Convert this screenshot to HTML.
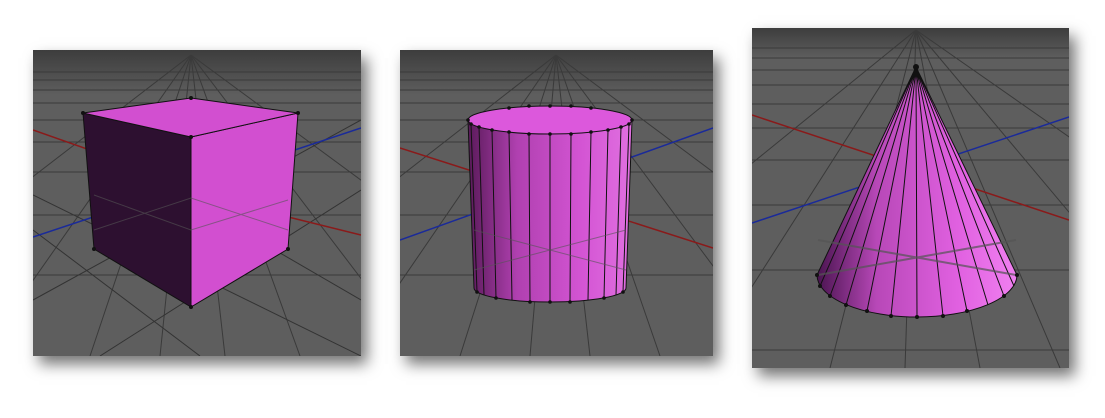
<!DOCTYPE html>
<html><head><meta charset="utf-8"><style>
html,body{margin:0;padding:0;background:#fff;width:1105px;height:418px;overflow:hidden}
.p{position:absolute;background:#5e5e5e;box-shadow:6px 8px 14px rgba(0,0,0,.55)}
svg{position:absolute;left:0;top:0}
</style></head><body>
<div class="p" style="left:33px;top:50px;width:328px;height:306px"></div>
<div class="p" style="left:400px;top:50px;width:313px;height:306px"></div>
<div class="p" style="left:752px;top:28px;width:317px;height:340px"></div>
<svg width="1105" height="418" viewBox="0 0 1105 418">
<defs>
<clipPath id="c1"><rect x="33" y="50" width="328" height="306"/></clipPath>
<clipPath id="c2"><rect x="400" y="50" width="313" height="306"/></clipPath>
<clipPath id="c3"><rect x="752" y="28" width="317" height="340"/></clipPath>
<linearGradient id="sky" x1="0" y1="0" x2="0" y2="1"><stop offset="0" stop-color="#3d3d3d"/><stop offset="1" stop-color="#5e5e5e"/></linearGradient>
<linearGradient id="cyl" x1="0" y1="0" x2="1" y2="0"><stop offset="0" stop-color="#5a1a5a"/><stop offset=".3" stop-color="#b040b0"/><stop offset=".7" stop-color="#d455d4"/><stop offset="1" stop-color="#e070e0"/></linearGradient>
<linearGradient id="cone" x1="0" y1="0" x2="1" y2="0"><stop offset="0" stop-color="#4a1450"/><stop offset=".3" stop-color="#b848b8"/><stop offset=".7" stop-color="#e060e0"/><stop offset="1" stop-color="#f080f0"/></linearGradient>
</defs>
<g stroke="#3a3a3a" stroke-width="1" fill="none">
<g clip-path="url(#c1)">
<rect x="33" y="50" width="328" height="45" fill="url(#sky)" stroke="none"/>
<path d="M33 72H361M33 80H361M33 90H361M33 103H361M33 120H361M33 142H361M33 172H361M33 215H361M33 275H361"/>
<path d="M191 55L-200 356M191 55L-20 356M191 55L90 356M191 55L160 356M191 55L225 356M191 55L300 356M191 55L420 356M191 55L600 356"/>
<path d="M33 195L361 356M33 230L200 356M120 160L361 300M33 300L361 120M100 356L361 190" stroke="#333"/>
<path d="M33 130L260 210M260 210L361 235" stroke="#8a1a1a" stroke-width="1.5"/>
<path d="M33 237L361 128" stroke="#1a2a9a" stroke-width="1.5"/>
</g>
<g clip-path="url(#c2)">
<rect x="400" y="50" width="313" height="45" fill="url(#sky)" stroke="none"/>
<path d="M400 72H713M400 80H713M400 90H713M400 103H713M400 120H713M400 142H713M400 172H713M400 215H713M400 275H713"/>
<path d="M556 55L170 356M556 55L350 356M556 55L460 356M556 55L530 356M556 55L590 356M556 55L660 356M556 55L780 356M556 55L960 356"/>
<path d="M400 148L713 248" stroke="#8a1a1a" stroke-width="1.5"/>
<path d="M400 240L713 128" stroke="#1a2a9a" stroke-width="1.5"/>
</g>
<g clip-path="url(#c3)">
<rect x="752" y="28" width="317" height="30" fill="url(#sky)" stroke="none"/>
<path d="M752 48H1069M752 58H1069M752 70H1069M752 85H1069M752 104H1069M752 128H1069M752 160H1069M752 205H1069M752 270H1069M752 350H1069"/>
<path d="M916 30L500 368M916 30L700 368M916 30L830 368M916 30L905 368M916 30L980 368M916 30L1060 368M916 30L1200 368M916 30L1400 368"/>
<path d="M752 115L1069 220" stroke="#8a1a1a" stroke-width="1.5"/>
<path d="M752 223L1069 117" stroke="#1a2a9a" stroke-width="1.5"/>
</g>
</g>
<!-- cube -->
<polygon points="83,113 191,137 191,307 94,249" fill="#2d1030" stroke="#111" stroke-width="1"/>
<polygon points="191,137 298,113 288,249 191,307" fill="#d24fd0" stroke="#111" stroke-width="1"/>
<polygon points="83,113 191,98 298,113 191,137" fill="#d24fd0" stroke="#111" stroke-width="1"/>
<path d="M94 230L191 198L288 230M94 195L191 230L288 200" stroke="#555" stroke-width="1" fill="none" opacity=".6"/>
<g fill="#111"><circle cx="83" cy="113" r="2"/><circle cx="191" cy="98" r="2"/><circle cx="298" cy="113" r="2"/><circle cx="191" cy="137" r="2"/><circle cx="94" cy="249" r="2"/><circle cx="191" cy="307" r="2"/><circle cx="288" cy="249" r="2"/></g>
<!-- cylinder -->
<path d="M468 120L474 288A76 14 0 0 0 626 288L632 120Z" fill="url(#cyl)" stroke="#111"/>
<g stroke="#111" stroke-width="1">
<path d="M629 124L623 292M621 127L616 295M608 130L604 298M591 132L588 300M571 134L570 302M550 134L550 302M529 134L530 302M509 132L512 300M492 130L496 298M479 127L484 295M471 124L477 292"/>
</g>
<ellipse cx="550" cy="120" rx="82" ry="14" fill="#dc58dc" stroke="#111"/>
<path d="M474 270L626 230M474 230L626 270" stroke="#555" opacity=".6"/>
<g fill="#111"><circle cx="629" cy="124" r="1.8"/><circle cx="621" cy="127" r="1.8"/><circle cx="608" cy="130" r="1.8"/><circle cx="591" cy="132" r="1.8"/><circle cx="571" cy="134" r="1.8"/><circle cx="550" cy="134" r="1.8"/><circle cx="529" cy="134" r="1.8"/><circle cx="509" cy="132" r="1.8"/><circle cx="492" cy="130" r="1.8"/><circle cx="479" cy="127" r="1.8"/><circle cx="471" cy="124" r="1.8"/><circle cx="550" cy="106" r="1.8"/><circle cx="571" cy="106" r="1.8"/><circle cx="529" cy="106" r="1.8"/><circle cx="591" cy="108" r="1.8"/><circle cx="509" cy="108" r="1.8"/><circle cx="632" cy="120" r="1.8"/><circle cx="468" cy="120" r="1.8"/><circle cx="623" cy="292" r="1.8"/><circle cx="604" cy="298" r="1.8"/><circle cx="570" cy="302" r="1.8"/><circle cx="550" cy="302" r="1.8"/><circle cx="530" cy="302" r="1.8"/><circle cx="496" cy="298" r="1.8"/><circle cx="477" cy="292" r="1.8"/></g>
<!-- cone -->
<path d="M916 67L817 275A100 42 0 0 0 1017 275Z" fill="url(#cone)" stroke="#111"/>
<path stroke="#111" stroke-width="1" d="M916 67L1014 286M916 67L1004 296M916 67L988 305M916 67L967 311M916 67L943 316M916 67L917 317M916 67L891 316M916 67L867 311M916 67L846 305M916 67L830 296M916 67L820 286"/>
<path d="M818 275L1016 240M818 240L1016 275" stroke="#555" stroke-width="2" opacity=".7"/>
<g fill="#111"><circle cx="916" cy="67" r="3"/><circle cx="1017" cy="275" r="2"/><circle cx="1004" cy="296" r="2"/><circle cx="967" cy="311" r="2"/><circle cx="943" cy="316" r="2"/><circle cx="917" cy="317" r="2"/><circle cx="891" cy="316" r="2"/><circle cx="867" cy="311" r="2"/><circle cx="846" cy="305" r="2"/><circle cx="830" cy="296" r="2"/><circle cx="820" cy="286" r="2"/><circle cx="817" cy="275" r="2"/></g>
</svg>
</body></html>
